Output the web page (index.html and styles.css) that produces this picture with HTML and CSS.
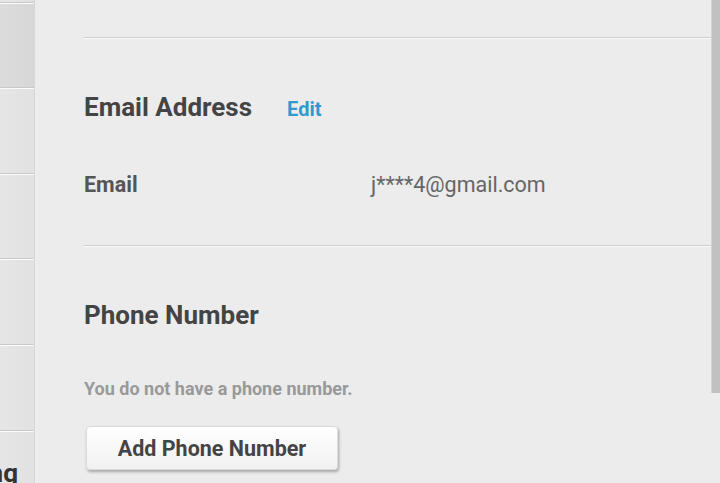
FILE: index.html
```html
<!DOCTYPE html>
<html lang="en">
<head>
  <meta charset="UTF-8">
  <meta name="viewport" content="width=device-width, initial-scale=1.0">
  <title>Account Settings</title>
  <link rel="stylesheet" href="styles.css">
</head>
<body>
  <div class="container">
    <div class="sidebar">
      <div class="nav-item"></div>
      <div class="nav-item active"></div>
      <div class="nav-item"></div>
      <div class="nav-item"></div>
      <div class="nav-item"></div>
      <div class="nav-item"></div>
      <div class="nav-item"><span class="nav-label">Billing</span></div>
    </div>

    <div class="content">
      <hr class="divider">

      <div class="section">
        <div class="section-head">
          <h2>Email Address</h2>
          <a class="edit-link" href="#">Edit</a>
        </div>
        <div class="field-row">
          <span class="field-label">Email</span>
          <span class="field-value">j****4@gmail.com</span>
        </div>
      </div>

      <hr class="divider">

      <div class="section">
        <div class="section-head">
          <h2>Phone Number</h2>
        </div>
        <p class="empty-note">You do not have a phone number.</p>
        <button class="add-btn">Add Phone Number</button>
      </div>

      <div class="scrollbar"></div>
    </div>
  </div>
</body>
</html>
```

FILE: styles.css
```css
body {
  margin: 0;
  padding: 0;
  font-family: Roboto, 'Liberation Sans', sans-serif;
  background-color: #ececec;
  overflow: hidden;
}

.container {
  display: flex;
  height: 483px;
}

.sidebar {
  width: 34px;
  flex-shrink: 0;
  border-right: 1px solid #d6d6d6;
  display: flex;
  flex-direction: column;
  margin-top: -82px;
  overflow: hidden;
}

.nav-item {
  height: 83.6px;
  flex-shrink: 0;
  background: linear-gradient(90deg, #e6e6e6, #e1e1e1);
  border-bottom: 1px solid #c9c9c9;
  box-shadow: 0 1px 0 #fbfbfb;
  margin-bottom: 1px;
  display: flex;
  justify-content: flex-end;
  align-items: flex-start;
  overflow: hidden;
}

.nav-item.active {
  background: linear-gradient(90deg, #dcdcdc, #d7d7d7);
}

.nav-label {
  font-size: 26px;
  line-height: 30px;
  font-weight: bold;
  color: #333;
  margin-right: 16px;
  margin-top: 26px;
  white-space: nowrap;
}

/* main panel */
.content {
  flex: 1;
  position: relative;
  padding: 37px 8px 0 49px;
}

.divider {
  border: none;
  border-top: 1px solid #cfcfcf;
  border-bottom: 1px solid #fbfbfb;
  height: 0;
  margin: 0;
}

.section {
  padding-top: 53px;
}

.section-head {
  display: flex;
  align-items: baseline;
  gap: 35px;
}

.section-head h2 {
  margin: 0;
  font-size: 26px;
  line-height: 30px;
  font-weight: bold;
  color: #444;
}

.edit-link {
  font-size: 20px;
  font-weight: bold;
  color: #3399cc;
  text-decoration: none;
}

.field-row {
  display: flex;
  align-items: baseline;
  margin-top: 50px;
  padding-bottom: 47px;
  line-height: 26px;
}

.field-label {
  width: 287px;
  font-size: 21.5px;
  font-weight: bold;
  color: #555;
}

.field-value {
  font-size: 21.5px;
  color: #666;
}

.empty-note {
  margin: 48px 0 0;
  font-size: 18px;
  line-height: 21px;
  font-weight: bold;
  color: #999;
}

.add-btn {
  margin-top: 27px;
  margin-left: 2px;
  width: 252px;
  height: 44px;
  font-family: inherit;
  font-size: 21.5px;
  font-weight: bold;
  color: #444;
  background: linear-gradient(#ffffff, #f1f1f1);
  border: 1px solid #dcdcdc;
  border-radius: 4px;
  box-shadow: 1px 2px 3px rgba(0, 0, 0, 0.3);
  cursor: pointer;
}

.scrollbar {
  position: absolute;
  top: 0;
  right: 0;
  width: 8px;
  height: 393px;
  background-color: #c1c1c1;
  border-left: 1px solid #d4d4d4;
}
```
